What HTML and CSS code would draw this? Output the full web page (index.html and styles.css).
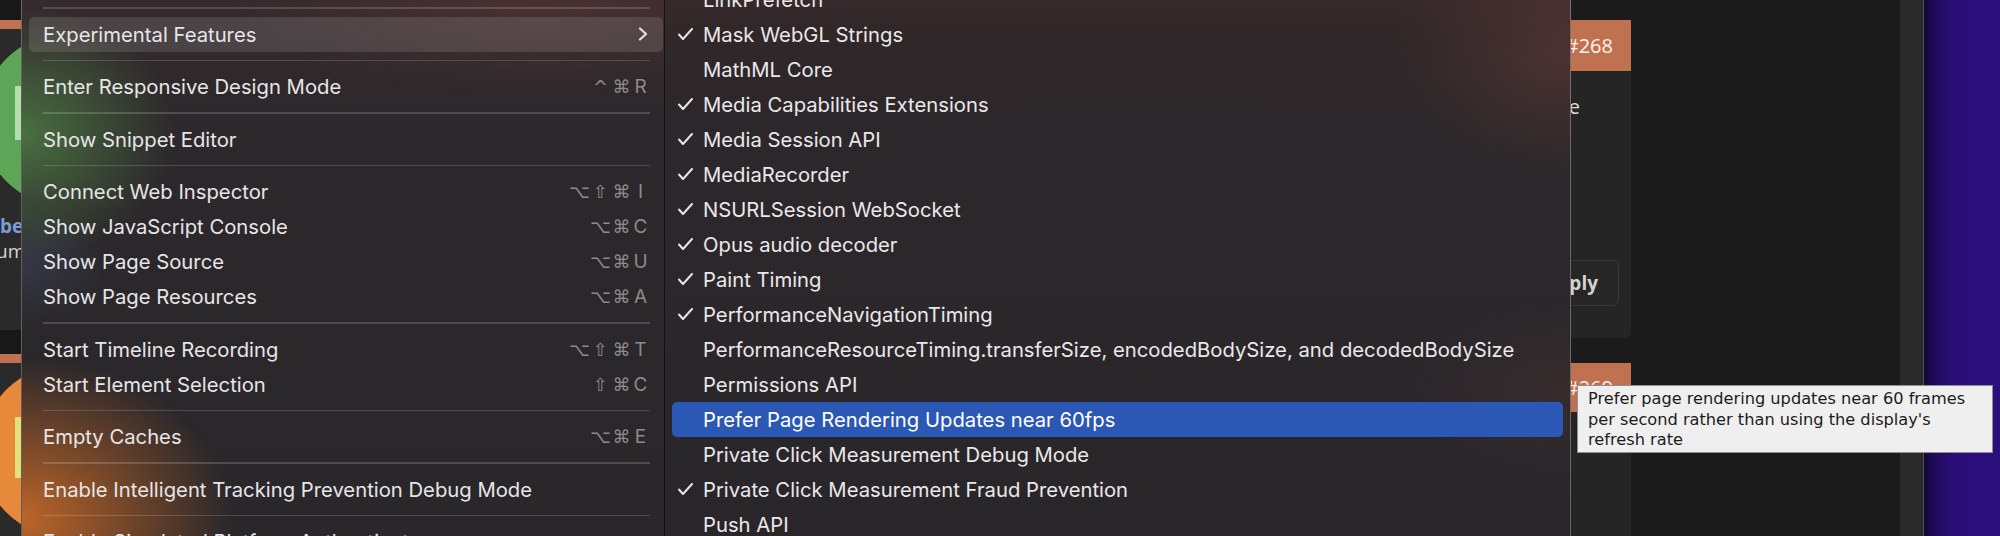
FILE: index.html
```html
<!DOCTYPE html>
<html lang="en">
<head>
<meta charset="utf-8">
<title>Develop menu</title>
<link rel="stylesheet" href="styles.css">
</head>
<body>
<div class="page">
  <div class="feed-left">
    <div class="lcard">
      <div class="avatar green"><span class="avatar-mark"></span></div>
      <div class="lname">bers</div>
      <div class="lsub">umni</div>
    </div>
    <div class="lcard">
      <div class="avatar orange"><span class="avatar-mark"></span></div>
    </div>
  </div>
  <div class="main">
    <div class="rcol">
      <div class="rcard">
        <div class="rhead">#268</div>
        <div class="rbody">
          <p class="rtext">to the issue</p>
          <button class="reply">Reply</button>
        </div>
      </div>
      <div class="rcard second">
        <div class="rhead">#269</div>
        <div class="rbody"></div>
      </div>
    </div>
  </div>
  <div class="track"></div>
  <div class="desktop"></div>
</div>

<div class="menu dev-menu">
  <div class="sep"></div>
  <div class="mi open"><span>Experimental Features</span><svg class="chev" width="10" height="14" viewBox="0 0 10 14"><path d="M2 1.5 L8 7 L2 12.5"/></svg></div>
  <div class="sep"></div>
  <div class="mi"><span>Enter Responsive Design Mode</span><span class="sc"><span class="k">^</span><span class="k">⌘</span><span class="key">R</span></span></div>
  <div class="sep"></div>
  <div class="mi"><span>Show Snippet Editor</span></div>
  <div class="sep"></div>
  <div class="mi"><span>Connect Web Inspector</span><span class="sc"><span class="k">⌥</span><span class="k">⇧</span><span class="k">⌘</span><span class="key">I</span></span></div>
  <div class="mi"><span>Show JavaScript Console</span><span class="sc"><span class="k">⌥</span><span class="k">⌘</span><span class="key">C</span></span></div>
  <div class="mi"><span>Show Page Source</span><span class="sc"><span class="k">⌥</span><span class="k">⌘</span><span class="key">U</span></span></div>
  <div class="mi"><span>Show Page Resources</span><span class="sc"><span class="k">⌥</span><span class="k">⌘</span><span class="key">A</span></span></div>
  <div class="sep"></div>
  <div class="mi"><span>Start Timeline Recording</span><span class="sc"><span class="k">⌥</span><span class="k">⇧</span><span class="k">⌘</span><span class="key">T</span></span></div>
  <div class="mi"><span>Start Element Selection</span><span class="sc"><span class="k">⇧</span><span class="k">⌘</span><span class="key">C</span></span></div>
  <div class="sep"></div>
  <div class="mi"><span>Empty Caches</span><span class="sc"><span class="k">⌥</span><span class="k">⌘</span><span class="key">E</span></span></div>
  <div class="sep"></div>
  <div class="mi"><span>Enable Intelligent Tracking Prevention Debug Mode</span></div>
  <div class="sep"></div>
  <div class="mi"><span>Enable Simulated Platform Authenticator</span></div>
</div>

<div class="menu sub-menu">
  <div class="si"><span class="ck"></span><span>LinkPrefetch</span></div>
  <div class="si"><span class="ck"><svg width="15" height="12" viewBox="0 0 15 12"><path d="M1 6.5 L5 11 L14 1"/></svg></span><span>Mask WebGL Strings</span></div>
  <div class="si"><span class="ck"></span><span>MathML Core</span></div>
  <div class="si"><span class="ck"><svg width="15" height="12" viewBox="0 0 15 12"><path d="M1 6.5 L5 11 L14 1"/></svg></span><span>Media Capabilities Extensions</span></div>
  <div class="si"><span class="ck"><svg width="15" height="12" viewBox="0 0 15 12"><path d="M1 6.5 L5 11 L14 1"/></svg></span><span>Media Session API</span></div>
  <div class="si"><span class="ck"><svg width="15" height="12" viewBox="0 0 15 12"><path d="M1 6.5 L5 11 L14 1"/></svg></span><span>MediaRecorder</span></div>
  <div class="si"><span class="ck"><svg width="15" height="12" viewBox="0 0 15 12"><path d="M1 6.5 L5 11 L14 1"/></svg></span><span>NSURLSession WebSocket</span></div>
  <div class="si"><span class="ck"><svg width="15" height="12" viewBox="0 0 15 12"><path d="M1 6.5 L5 11 L14 1"/></svg></span><span>Opus audio decoder</span></div>
  <div class="si"><span class="ck"><svg width="15" height="12" viewBox="0 0 15 12"><path d="M1 6.5 L5 11 L14 1"/></svg></span><span>Paint Timing</span></div>
  <div class="si"><span class="ck"><svg width="15" height="12" viewBox="0 0 15 12"><path d="M1 6.5 L5 11 L14 1"/></svg></span><span>PerformanceNavigationTiming</span></div>
  <div class="si"><span class="ck"></span><span>PerformanceResourceTiming.transferSize, encodedBodySize, and decodedBodySize</span></div>
  <div class="si"><span class="ck"></span><span>Permissions API</span></div>
  <div class="si hl"><span class="ck"></span><span>Prefer Page Rendering Updates near 60fps</span></div>
  <div class="si"><span class="ck"></span><span>Private Click Measurement Debug Mode</span></div>
  <div class="si"><span class="ck"><svg width="15" height="12" viewBox="0 0 15 12"><path d="M1 6.5 L5 11 L14 1"/></svg></span><span>Private Click Measurement Fraud Prevention</span></div>
  <div class="si"><span class="ck"></span><span>Push API</span></div>
</div>

<div class="tip">Prefer page rendering updates near 60 frames per second rather than using the display's refresh rate</div>
</body>
</html>
```

FILE: styles.css
```css
* { box-sizing: border-box; margin: 0; padding: 0; }

html, body {
  width: 2000px;
  height: 536px;
  overflow: hidden;
  background: #1b1b1b;
}

body {
  position: relative;
  font-family: Inter, "Liberation Sans", sans-serif;
}

/* ---------- page behind the menus ---------- */
.page {
  display: flex;
  height: 536px;
  overflow: hidden;
}

.feed-left {
  width: 240px;
  flex: 0 0 240px;
  background: #181818;
  display: flex;
  flex-direction: column;
  gap: 24px;
  padding-top: 20px;
  overflow: hidden;
}

.lcard {
  height: 310px;
  flex: 0 0 auto;
  background: #2a2a2a;
  border-top: 9px solid #c0714f;
  overflow: hidden;
}

.lcard + .lcard { height: 300px; }

.avatar {
  width: 174px;
  height: 174px;
  border-radius: 50%;
  margin: 4px 0 0 -19px;
  padding: 53px 0 0 34px;
}

.avatar.green { background: #5ea657; }
.avatar.orange { background: #e6893a; margin-top: 1px; }

.avatar-mark {
  display: block;
  width: 6px;
  height: 54px;
  background: #b4dfac;
}

.avatar.orange .avatar-mark {
  height: 61px;
  background: #e4df7a;
}

.lname {
  margin: 8px 0 0 0;
  font: 700 19px/22px "Open Sans", sans-serif;
  color: #7d9bd6;
}

.lsub {
  margin: 2px 0 0 -4px;
  font: 400 19px/24px "Open Sans", sans-serif;
  color: #d6d6d6;
}

.main {
  flex: 1;
  display: flex;
  justify-content: flex-end;
  padding-right: 269px;
}

.rcol {
  width: 380px;
  display: flex;
  flex-direction: column;
  gap: 25px;
  padding-top: 20px;
}

.rcard { display: flex; flex-direction: column; }

.rhead {
  height: 51px;
  background: #c0714f;
  color: #fbf3ee;
  font: 400 20px/51px "Open Sans", sans-serif;
  text-align: right;
  padding-right: 18px;
}

.rbody {
  height: 267px;
  background: #252525;
  border-radius: 0 0 6px 6px;
  display: flex;
  flex-direction: column;
  padding: 24px 12px 32px 0;
}

.rtext {
  font: 400 20px/24px "Open Sans", sans-serif;
  color: #dedede;
  text-align: right;
  padding-right: 39px;
  white-space: nowrap;
}

.reply {
  margin-top: auto;
  align-self: flex-end;
  height: 46px;
  padding: 0 20px;
  background: #262626;
  border: 1.5px solid #3a3a3a;
  border-radius: 6px;
  color: #d2d2d2;
  font: 700 19px "Open Sans", sans-serif;
}

.rcard.second .rhead { height: 49px; line-height: 49px; }
.rcard.second .rbody { height: 200px; border-radius: 0; }

.track {
  flex: 0 0 24px;
  background: #2a2a2a;
  border-right: 1px solid #505050;
}

.desktop {
  flex: 0 0 76px;
  background: linear-gradient(90deg, #110836 0px, #1d0b58 10px, #290e74 26px, #2c0f7d 50px, #2b0f7b 100%);
}

/* ---------- menus ---------- */
.menu {
  position: absolute;
  color: #e7e5e7;
  font-size: 20.25px;
  white-space: nowrap;
}

.dev-menu {
  left: 21px;
  top: -1px;
  width: 650px;
  height: 560px;
  padding: 0 8px 0 7px;
  overflow: hidden;
  border-left: 1px solid rgba(255, 255, 255, 0.26);
  background:
    radial-gradient(ellipse 220px 180px at 0px 135px, rgba(92, 160, 78, 0.6), rgba(92, 160, 78, 0) 70%),
    radial-gradient(ellipse 130px 90px at 0px 265px, rgba(90, 110, 170, 0.22), rgba(90, 110, 170, 0) 70%),
    radial-gradient(ellipse 300px 230px at 0px 520px, rgba(214, 112, 40, 0.85), rgba(214, 112, 40, 0) 70%),
    radial-gradient(ellipse 380px 120px at 80% 0px, rgba(110, 60, 60, 0.35), rgba(110, 60, 60, 0) 80%),
    linear-gradient(180deg, #352a2d 0px, #2c282b 120px, #29272a 100%);
}

.mi {
  height: 35px;
  display: flex;
  align-items: center;
  padding: 0 14px;
  border-radius: 5px;
}

.mi.open { background: rgba(255, 255, 255, 0.12); }

.chev {
  margin-left: auto;
  margin-right: 1px;
}

.chev path {
  fill: none;
  stroke: #e4e2e4;
  stroke-width: 2.2;
  stroke-linecap: round;
  stroke-linejoin: round;
}

.sc {
  margin-left: auto;
  display: flex;
  align-items: center;
  color: #8e8a8d;
}

.sc .k {
  width: 21px;
  text-align: center;
  font-family: "DejaVu Sans", sans-serif;
  font-size: 18px;
}

.sc .key {
  width: 17px;
  text-align: center;
  font-size: 19px;
}

.sep {
  height: 17.5px;
  display: flex;
  align-items: center;
  padding: 0 13px 0 14px;
}

.sep::after {
  content: "";
  flex: 1;
  height: 1.5px;
  background: rgba(255, 255, 255, 0.17);
}

.sub-menu {
  left: 665px;
  top: -18.5px;
  width: 906px;
  height: 580px;
  padding: 0 8px 0 7px;
  overflow: hidden;
  color: #eae8ea;
  box-shadow: -1px 0 0 rgba(0, 0, 0, 0.55), inset -1px 0 0 rgba(255, 255, 255, 0.3);
  background:
    radial-gradient(ellipse 220px 160px at 100% 70px, rgba(150, 80, 70, 0.28), rgba(150, 80, 70, 0) 80%),
    radial-gradient(ellipse 200px 110px at 100% 410px, rgba(150, 80, 70, 0.12), rgba(150, 80, 70, 0) 80%),
    linear-gradient(180deg, #3a2a2d 0px, #302729 50px, #2b272a 160px, #29262a 100%);
}

.si {
  height: 35px;
  display: flex;
  align-items: center;
  padding-left: 6px;
  border-radius: 5px;
}

.si .ck {
  width: 25px;
  flex: 0 0 25px;
  display: flex;
  align-items: center;
}

.si .ck path {
  fill: none;
  stroke: #e7e5e7;
  stroke-width: 2;
  stroke-linecap: round;
  stroke-linejoin: round;
}

.si.hl {
  background: #2b57b5;
  color: #ffffff;
}

/* ---------- tooltip ---------- */
.tip {
  position: absolute;
  left: 1577px;
  top: 385px;
  width: 416px;
  height: 68px;
  padding: 3px 10px;
  background: #efefef;
  border: 1px solid #8f8f8f;
  color: #1c1c1c;
  font: 16.2px/20.7px "DejaVu Sans", sans-serif;
}
```
